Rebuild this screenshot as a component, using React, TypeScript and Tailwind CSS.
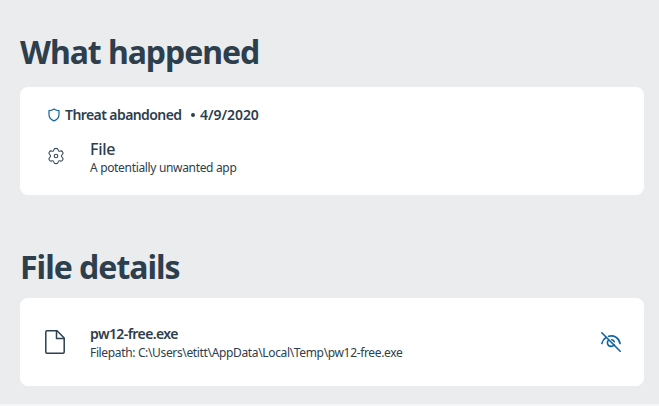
import React from 'react';

const ShieldIcon: React.FC = () => (
  <svg width="12" height="14" viewBox="0 0 12 14" fill="none" stroke="#1264a3" strokeWidth="1.2" strokeLinejoin="round">
    <path d="M6 1C4.6 2.1 2.8 2.7 1 2.7V6.7C1 9.7 3 11.6 6 12.9C9 11.6 11 9.7 11 6.7V2.7C9.2 2.7 7.4 2.1 6 1Z" />
  </svg>
);

const GearIcon: React.FC = () => (
  <svg width="16" height="18" viewBox="0 0 16 18" fill="none" stroke="#34495a" strokeWidth="1.1" strokeLinejoin="round">
    <path d="M5.9 2.7C6.2 0.9 9.8 0.9 10.1 2.7C10.3 4.2 11.1 4.6 12.4 4C14.1 3.3 15.9 6.3 14.4 7.4C13.2 8.4 13.2 9.6 14.4 10.6C15.9 11.7 14.1 14.7 12.4 14C11.1 13.4 10.3 13.8 10.1 15.3C9.8 17.1 6.2 17.1 5.9 15.3C5.7 13.8 4.9 13.4 3.6 14C1.9 14.7 0.1 11.7 1.6 10.6C2.8 9.6 2.8 8.4 1.6 7.4C0.1 6.3 1.9 3.3 3.6 4C4.9 4.6 5.7 4.2 5.9 2.7Z" />
    <circle cx="8" cy="9" r="1.8" />
  </svg>
);

const DocumentIcon: React.FC = () => (
  <svg width="20" height="24" viewBox="0 0 20 24" fill="none" stroke="#2b4050" strokeWidth="1.5" strokeLinejoin="round">
    <path d="M2 0.8H12L19.2 8V22Q19.2 23.2 18 23.2H2Q0.8 23.2 0.8 22V2Q0.8 0.8 2 0.8Z" />
    <path d="M11.5 0.8V8.5H19.2" />
  </svg>
);

const HiddenIcon: React.FC = () => (
  <svg width="20" height="20" viewBox="0 0 20 20" fill="none" stroke="#1264a3" strokeWidth="1.6" strokeLinecap="round">
    <path d="M0.8 0.8L19.2 19.2" />
    <path d="M0.9 11.5C1.5 8.9 2.9 6.8 5 5.5" />
    <path d="M7.5 4.3C13 2.8 18 5.8 19.1 11.5" />
    <path d="M7.3 8.2C5.6 10.2 6.3 14.4 10 14.4C11.5 14.4 12.5 13.7 13.1 12.6" />
    <path d="M10.7 7.7C12 7.9 12.9 8.7 13.3 9.8" />
  </svg>
);

const App: React.FC = () => {
  return (
    <main className="flex h-[406px] w-[659px] flex-col border-b-2 border-[#f4f5f6] bg-[#ebecee] pl-5 pr-[15px] pt-8 font-['Noto_Sans','Open_Sans',sans-serif] text-[#2d3e4d]">
      <h1 className="h-[55px] whitespace-nowrap text-[32px] font-bold leading-10 tracking-[-1.04px]">What happened</h1>
      <section className="h-[108px] shrink-0 rounded-lg bg-white pl-7 pt-[18px]">
        <div className="flex h-5 items-center whitespace-nowrap text-sm font-semibold leading-5 tracking-[-0.58px]">
          <ShieldIcon />
          <span className="ml-[5px] w-[126px]">Threat abandoned</span>
          <span className="mr-[5px] size-1 shrink-0 rounded-full bg-[#2d3e4d]" />
          <span className="tracking-[-0.05px]">4/9/2020</span>
        </div>
        <div className="mt-[13px] flex">
          <div className="w-[42px] pt-[9px]">
            <GearIcon />
          </div>
          <div className="whitespace-nowrap">
            <h2 className="text-base font-medium leading-[22px] tracking-[-0.3px]">File</h2>
            <p className="text-xs leading-4 tracking-[-0.33px]">A potentially unwanted app</p>
          </div>
        </div>
      </section>

      <h1 className="mt-[52px] h-[51px] whitespace-nowrap text-[32px] font-bold leading-10 tracking-[-1px]">File details</h1>
      <section className="flex h-[88px] shrink-0 items-center rounded-lg bg-white pl-[25px] pr-[23px]">
        <DocumentIcon />
        <div className="ml-[25px] flex-1 whitespace-nowrap pt-px">
          <h2 className="text-sm font-semibold leading-5 tracking-[-0.58px]">pw12-free.exe</h2>
          <p className="text-xs leading-[17px] tracking-[-0.35px]">{'Filepath: C:\\Users\\etitt\\AppData\\Local\\Temp\\pw12-free.exe'}</p>
        </div>
        <HiddenIcon />
      </section>
    </main>
  );
};

export default App;
